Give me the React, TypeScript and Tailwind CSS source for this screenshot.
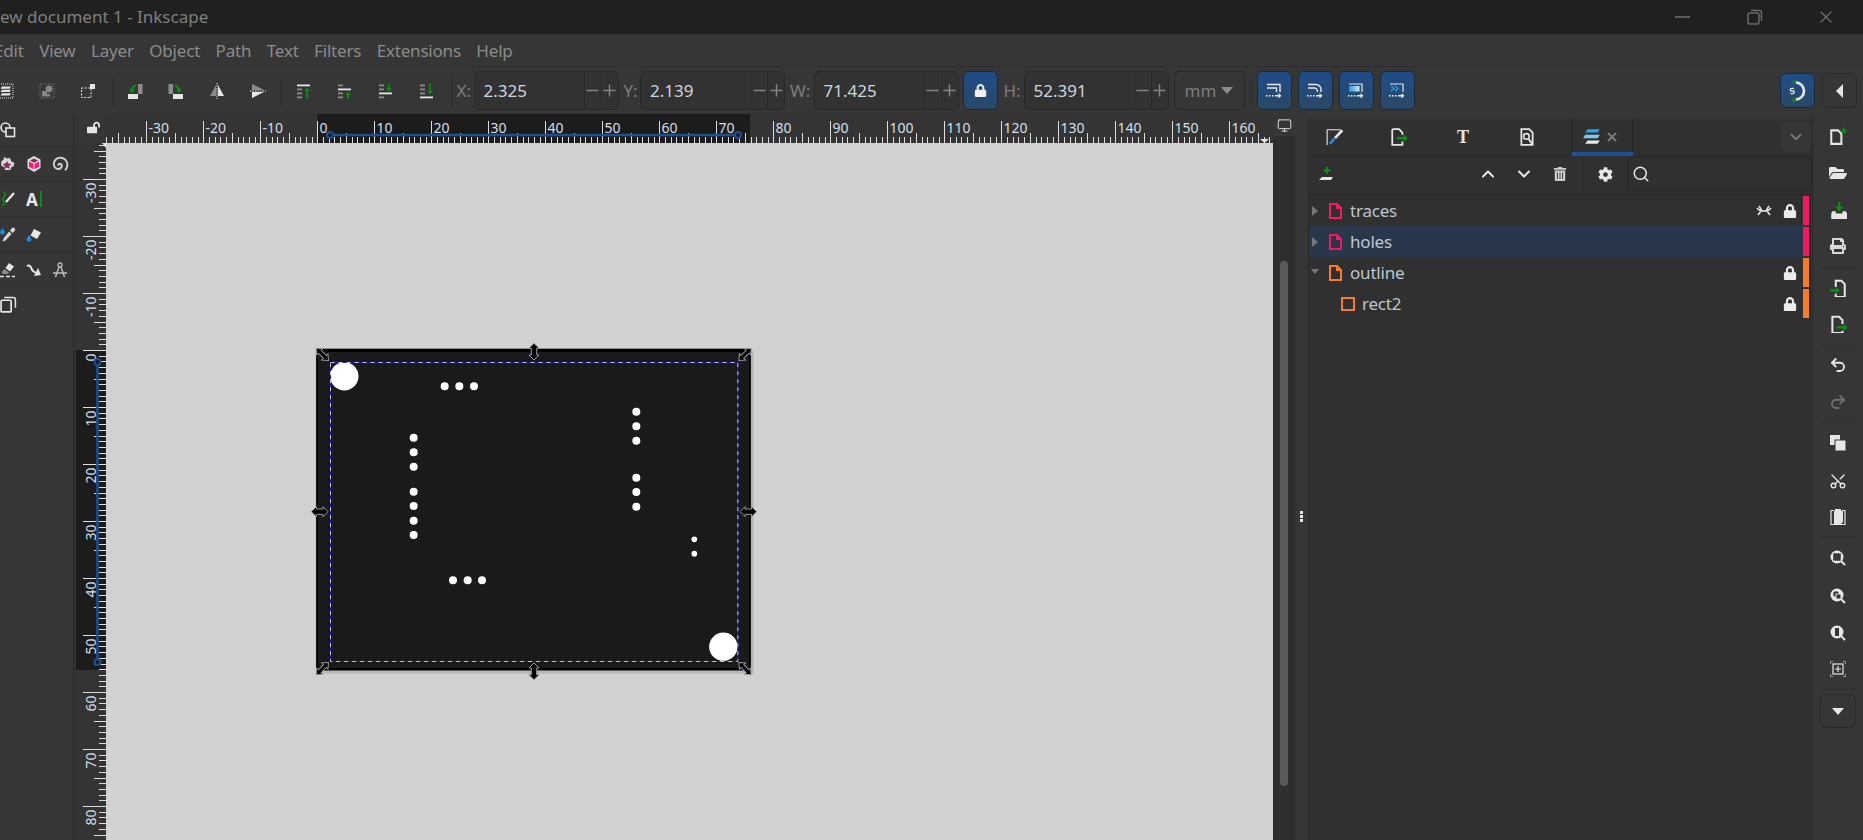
import type { ReactNode } from 'react';
import { ChevronDown, ChevronUp, Minus, Monitor, Plus, Redo2, Scissors, Search, Undo2, X } from 'lucide-react';
import { FaCog, FaFolderOpen, FaLock, FaLockOpen, FaPrint, FaTrashAlt } from 'react-icons/fa';

const W = '#e6e6e6';
const GRAY = '#8c8c8c';
const GREEN = '#0a8f14';
const BLUE = '#1d4f91';

function Ico({ children, size = 16 }: { children: ReactNode; size?: number }) {
  return (
    <svg width={size} height={size} viewBox="0 0 16 16" className="shrink-0">
      {children}
    </svg>
  );
}

function Slot({ w, children }: { w: string; children: ReactNode }) {
  return <div className={`flex items-center justify-center shrink-0 ${w}`}>{children}</div>;
}

const Arrow = ({ x, y1, y2, down }: { x: number; y1: number; y2: number; down?: boolean }) => (
  <path
    fill={GREEN}
    d={
      down
        ? `M${x - 0.8} ${y1}h1.6V${y2 - 3}H${x + 3}L${x} ${y2}L${x - 3} ${y2 - 3}H${x - 0.8}Z`
        : `M${x - 0.8} ${y2}h1.6V${y1 + 3}H${x + 3}L${x} ${y1}L${x - 3} ${y1 + 3}H${x - 0.8}Z`
    }
  />
);

// z-order icons: which of the four rows is the white one
const Order = ({ white, children }: { white: number; children: ReactNode }) => (
  <Ico>
    {[1.5, 5.5, 9.5, 13.5].map((y, i) =>
      i === white ? (
        <rect key={y} x="1" y={y} width="13" height="1.8" fill={W} />
      ) : (
        <rect key={y} x="1" y={y} width="5" height="1.8" fill={GRAY} />
      ),
    )}
    {children}
  </Ico>
);

const CmdArrow = () => (
  <g fill={W}>
    <rect x="0" y="12" width="1.6" height="1.6" />
    <rect x="3" y="12" width="1.6" height="1.6" />
    <rect x="6" y="12" width="1.6" height="1.6" />
    <path d="M9 12h3.5v-2l3 2.8-3 2.8v-2H9z" />
  </g>
);

const BlueBtn = ({ children }: { children: ReactNode }) => (
  <div className="flex h-[39px] w-[35px] shrink-0 items-center justify-center rounded-md border border-[#1a2a3e] bg-linear-to-b from-[#1e4c88] to-[#2a4866]">
    {children}
  </div>
);

function Field({ value }: { value: string }) {
  return (
    <div className="flex h-[39px] w-[145px] shrink-0 items-stretch rounded-md border border-[#282828] bg-[#323232]">
      <div className="flex flex-1 items-center pl-[9px] text-[17px] text-[#ccd6df]">{value}</div>
      <div className="flex w-[17px] items-center justify-center border-l border-[#2c2c2c]">
        <Minus size={19} strokeWidth={1.8} color="#858585" className="shrink-0" />
      </div>
      <div className="flex w-[17px] items-center justify-center border-l border-[#2c2c2c]">
        <Plus size={19} strokeWidth={1.8} color="#858585" className="shrink-0" />
      </div>
    </div>
  );
}

function Label({ w, ml, children }: { w: string; ml: string; children: ReactNode }) {
  return <div className={`shrink-0 text-[17px] text-[#7d7d7d] ${w} ${ml}`}>{children}</div>;
}

const Sep = ({ cls }: { cls: string }) => <div className={`h-[34px] w-px shrink-0 bg-[#2f2f2f] ${cls}`} />;

function TopBar() {
  return (
    <>
      <div className="flex h-[34px] items-center justify-between bg-[#202020] text-[17px] text-[#7f7f7f]">
        <div className="ml-0">ew document 1 - Inkscape</div>
        <div className="flex items-center">
          <div className="mr-[57px] h-[2px] w-[15px] bg-[#5c5c5c]" />
          <svg width="16" height="16" viewBox="0 0 16 16" className="mr-[53px]" fill="none" stroke="#6a6a6a" strokeWidth="1.5">
            <rect x="1" y="4" width="11" height="11" rx="2" />
            <path d="M4 1.5h8.5a2 2 0 0 1 2 2V12" />
          </svg>
          <X size={20} strokeWidth={1.4} color="#6f6f6f" className="mr-[27px]" />
        </div>
      </div>
      <div className="flex h-[32px] items-center gap-[15.5px] overflow-hidden bg-[#363636] pt-[2px] text-[17px] tracking-[-0.2px] text-[#8b8b8b]">
        <span className="-ml-[6px]">Edit</span>
        <span>View</span>
        <span>Layer</span>
        <span>Object</span>
        <span>Path</span>
        <span>Text</span>
        <span>Filters</span>
        <span>Extensions</span>
        <span>Help</span>
      </div>
    </>
  );
}

function Toolbar() {
  return (
    <div className="flex h-[48px] items-center border-t border-[#303030] bg-[#363636]">
      <div className="-ml-[14.5px] flex items-center">
        <Slot w="w-[41px]">
          <Ico>
            <rect x="1" y="1" width="14" height="14" fill="none" stroke={W} strokeDasharray="1 1" />
            <path fill={W} d="M4 3.5h9l-1.5 2.2h-9zM4 6.8h9l-1.5 2.2h-9zM4 10.2h9l-1.5 2.2h-9z" />
          </Ico>
        </Slot>
        <Slot w="w-[41px]">
          <Ico>
            <rect x="1" y="1" width="14" height="14" fill="none" stroke="#777" strokeDasharray="1 1" />
            <circle cx="10" cy="6" r="3.4" fill="#888" />
            <path fill="#888" d="M3 8h5v3h3v2.5H3z" />
          </Ico>
        </Slot>
        <Slot w="w-[41px]">
          <Ico>
            <rect x="1.5" y="5" width="9.5" height="9.5" fill="none" stroke={W} strokeDasharray="2 1.4" />
            <rect x="10" y="1" width="5" height="5" fill={W} />
          </Ico>
        </Slot>
      </div>
      <Sep cls="ml-[3px] mr-[2px]" />
      <Slot w="w-[41px]">
        <Ico>
          <rect x="11" y="1" width="4.6" height="10" fill="#8c8c8c" />
          <rect x="1" y="11" width="10" height="5" fill={W} />
          <path fill="none" stroke={GREEN} strokeWidth="2" d="M9.5 2.5C6.5 3 5 5 5 8" />
          <path fill={GREEN} d="M1.8 6.5h6.4L5 10z" />
        </Ico>
      </Slot>
      <Slot w="w-[41px]">
        <Ico>
          <rect x="0.5" y="1" width="4.6" height="10" fill="#8c8c8c" />
          <rect x="5" y="11" width="10" height="5" fill={W} />
          <path fill="none" stroke={GREEN} strokeWidth="2" d="M6.5 2.5C9.5 3 11 5 11 8" />
          <path fill={GREEN} d="M7.8 6.5h6.4L11 10z" />
        </Ico>
      </Slot>
      <Slot w="w-[41px]">
        <Ico>
          <path fill="#8c8c8c" d="M7 2v11H1z" />
          <path fill={W} d="M9 2l6 11H9z" />
          <path stroke={W} strokeDasharray="1.5 1" d="M8 0v16" />
        </Ico>
      </Slot>
      <Slot w="w-[41px]">
        <Ico>
          <path fill="#8c8c8c" d="M2 1l12 6H2z" />
          <path fill={W} d="M2 9h12L2 15z" />
          <path stroke={W} strokeDasharray="1.5 1" d="M0 8h16" />
        </Ico>
      </Slot>
      <Sep cls="ml-[2px] mr-[2px]" />
      <Slot w="w-[41px]">
        <Order white={0}>
          <Arrow x={11} y1={5} y2={16} />
        </Order>
      </Slot>
      <Slot w="w-[41px]">
        <Order white={1}>
          <Arrow x={11} y1={9} y2={16} />
        </Order>
      </Slot>
      <Slot w="w-[41px]">
        <Order white={2}>
          <Arrow x={11} y1={1} y2={8} down />
        </Order>
      </Slot>
      <Slot w="w-[41px]">
        <Order white={3}>
          <Arrow x={11} y1={0} y2={11} down />
        </Order>
      </Slot>
      <Sep cls="ml-[3px]" />
      <Label w="w-[17px]" ml="ml-[5px]">X:</Label>
      <Field value="2.325" />
      <Label w="w-[16.5px]" ml="ml-[5px]">Y:</Label>
      <Field value="2.139" />
      <Label w="w-[23.5px]" ml="ml-[5px]">W:</Label>
      <Field value="71.425" />
      <div className="ml-[4px]">
        <BlueBtn>
          <FaLock size={13} color="#f0f0f0" />
        </BlueBtn>
      </div>
      <Label w="w-[20px]" ml="ml-[6px]">H:</Label>
      <Field value="52.391" />
      <div className="ml-[5px] flex h-[39px] w-[71px] shrink-0 items-center justify-center gap-[5px] rounded-md border border-[#282828] text-[17px] text-[#7d7d7d]">
        mm
        <svg width="12" height="8" viewBox="0 0 12 8">
          <path fill="#8c8c8c" d="M0 0h12L6 7z" />
        </svg>
      </div>
      <Sep cls="ml-[5px] mr-[6px]" />
      <div className="flex gap-[6px]">
        <BlueBtn>
          <Ico>
            <path fill="none" stroke={W} strokeWidth="1.4" d="M1 1.5h13V9M1 5h9.5v4" />
            <CmdArrow />
          </Ico>
        </BlueBtn>
        <BlueBtn>
          <Ico>
            <path fill="none" stroke={W} strokeWidth="1.4" d="M1 1.5h8a5 5 0 0 1 5 5V9M1 5h6a3.5 3.5 0 0 1 3.5 3.5V9" />
            <CmdArrow />
          </Ico>
        </BlueBtn>
        <BlueBtn>
          <Ico>
            <defs>
              <linearGradient id="bbox-grad" x1="0" x2="1" y1="0" y2="0">
                <stop offset="0" stopColor="#1b9be6" />
                <stop offset="1" stopColor="#d8ecf8" />
              </linearGradient>
            </defs>
            <rect x="1" y="3" width="10.5" height="5.5" fill="url(#bbox-grad)" />
            <path fill="none" stroke={W} strokeWidth="1.2" d="M1 1h13v8" />
            <CmdArrow />
          </Ico>
        </BlueBtn>
        <BlueBtn>
          <Ico>
            <path fill="none" stroke={W} strokeWidth="1.2" d="M1 1h13v8" />
            <path fill="none" stroke="#29a5ee" strokeWidth="1.2" d="M2 3l3 2.5L2 8M6 3l3 2.5L6 8" />
            <CmdArrow />
          </Ico>
        </BlueBtn>
      </div>
      <div className="ml-auto flex gap-[7px] pr-[6px]">
        <div className="flex h-[35px] w-[35px] items-center justify-center rounded-md border border-[#1a2a3e] bg-linear-to-b from-[#1e4c88] to-[#2a4866]">
          <svg width="24" height="24" viewBox="0 0 18 18">
            <path fill="none" stroke={W} strokeWidth="2" d="M7 2.5a6.5 6.5 0 0 1 0 13" />
            <rect x="5" y="1" width="2.6" height="2.6" fill={GREEN} />
            <rect x="5" y="14.4" width="2.6" height="2.6" fill={GREEN} />
            <path fill="none" stroke={W} strokeWidth="1" d="M6 7H4.2a1 1 0 0 0 0 2h1a1 1 0 0 1 0 2H3.4" />
          </svg>
        </div>
        <div className="flex h-[35px] w-[35px] items-center justify-center rounded-md border border-[#2a2a2a]">
          <svg width="8" height="14" viewBox="0 0 8 14">
            <path fill={W} d="M7 0v14L0 7z" />
          </svg>
        </div>
      </div>
    </div>
  );
}

const ToolRow = ({ h, children }: { h: string; children: ReactNode }) => (
  <div className={`-ml-[5px] flex items-center border-b border-[#2f2f2f] ${h}`}>{children}</div>
);

function ToolColumn() {
  return (
    <div className="w-[73px] shrink-0 overflow-hidden bg-[#363636]">
      <ToolRow h="h-[33px]">
        <Slot w="w-[26px]">
          <Ico>
            <circle cx="5.5" cy="5.5" r="4.5" fill="none" stroke={W} strokeWidth="1.6" />
            <rect x="6" y="6" width="8.5" height="8.5" fill="#363636" stroke={W} strokeWidth="1.6" />
          </Ico>
        </Slot>
      </ToolRow>
      <ToolRow h="h-[35px]">
        <Slot w="w-[26px]">
          <Ico>
            <path fill="#d8d8d8" d="M4 1l3 1.5L10 2l1 3 3.5 2-1 3.5-2 .5-1 3H5L4 11 1 9.5 1.5 5 3.5 4z" />
            <path fill="#8b2a5f" d="M7 5l1.3 2.6 3 .4-2.2 2 .6 3L7 11.5 4.3 13l.5-3-2.2-2 3-.4z" />
          </Ico>
        </Slot>
        <Slot w="w-[26px]">
          <Ico>
            <path fill="#dcdcdc" d="M8 0l6.5 3.5v8.5L8 16l-6.5-4V3.500z" />
            <path fill="#f01f7a" d="M3 5.500l4.500 2.300v5.400L3 10.800zM13 5.500v5.300l-4.500 2.400V7.800z" />
            <path fill="#7a2a55" d="M8 2.500l4 2-4 2.200-4-2.200z" />
          </Ico>
        </Slot>
        <Slot w="w-[26px]">
          <Ico size={18}>
            <path
              fill="none"
              stroke="#d0d0d0"
              strokeWidth="1.8"
              d="M6.500 9.500a1.500 1.500 0 0 1 3-.5 3 3 0 0 1-3 3.500A4.300 4.300 0 0 1 2.500 8a5.500 5.500 0 0 1 5.700-5.500A6 6 0 0 1 14.500 9c0 2-1 3.500-2 4.500"
            />
          </Ico>
        </Slot>
      </ToolRow>
      <ToolRow h="h-[35px]">
        <Slot w="w-[26px]">
          <Ico>
            <path fill="none" stroke={GREEN} strokeWidth="1.6" d="M3 1c3 1 3 3 1 5s-1 5 0 5 2 2-2 3" />
            <path stroke={W} strokeWidth="2.2" d="M6 11l8-9" />
          </Ico>
        </Slot>
        <Slot w="w-[26px]">
          <div className="flex items-center gap-[2px]">
            <span className="text-[17px] font-bold leading-none text-[#e6e6e6]">A</span>
            <div className="h-[16px] w-[2px] bg-[#0a8f14]" />
          </div>
        </Slot>
      </ToolRow>
      <ToolRow h="h-[36px]">
        <Slot w="w-[26px]">
          <Ico>
            <path fill="#1a8fe0" d="M2.500 1L5 5a2.500 2.500 0 1 1-5 0z" />
            <path fill="#d8d8d8" d="M12 1a2 2 0 0 1 2.800 2.800L12.500 6 10 3.500zM9 4.500L11.500 7 5.500 13.500l-3 1 1-3z" />
          </Ico>
        </Slot>
        <Slot w="w-[26px]">
          <Ico>
            <path fill={W} d="M8 2l7 3.500-4 6.500-6.500-3.500z" />
            <path fill="#1a8fe0" d="M3 8l2.500 4a2.500 2.500 0 1 1-5 0z" />
          </Ico>
        </Slot>
      </ToolRow>
      <ToolRow h="h-[34px]">
        <Slot w="w-[26px]">
          <Ico>
            <path fill={W} d="M9 1l5 3.500-4 5L5.500 6z" />
            <path fill="#8c8c8c" d="M4.500 7L9 10.500 7.500 12H3l-1.500-2z" />
            <path stroke={W} strokeWidth="1.5" strokeDasharray="4 2" d="M0 14.500h15" />
          </Ico>
        </Slot>
        <Slot w="w-[26px]">
          <Ico>
            <path fill="none" stroke={W} strokeWidth="2" d="M1 4c4-2 4 3 6 5l3 2" />
            <path fill={W} d="M12 6l3 7-7 1z" />
          </Ico>
        </Slot>
        <Slot w="w-[26px]">
          <Ico>
            <circle cx="8" cy="3" r="2" fill="none" stroke="#bdbdbd" strokeWidth="1.3" />
            <path fill="none" stroke="#bdbdbd" strokeWidth="1.5" d="M7 5L3.500 15M9 5l3.500 10M1 11h14" />
          </Ico>
        </Slot>
      </ToolRow>
      <ToolRow h="h-[35px] border-b-0">
        <Slot w="w-[26px]">
          <Ico size={17}>
            <rect x="1" y="4" width="9.5" height="11" rx="1" fill="#363636" stroke={W} strokeWidth="1.6" />
            <path fill="none" stroke={W} strokeWidth="1.4" d="M4 1.500h8.500a2 2 0 0 1 2 2V11" />
          </Ico>
        </Slot>
      </ToolRow>
    </div>
  );
}

const MM = 5.7;

function TopRuler() {
  const zero = 211.3;
  const ticks: ReactNode[] = [];
  const labels: ReactNode[] = [];
  for (let mm = -37; mm <= 167; mm++) {
    const x = Math.round(zero + mm * MM) + 0.5;
    const top = mm % 10 === 0 ? 7 : mm % 5 === 0 ? 19 : 23;
    ticks.push(<path key={mm} d={`M${x} ${top}V29`} stroke="#dedede" />);
    if (mm % 10 === 0) {
      labels.push(
        <text key={mm} x={x + 2} y={19} fill="#d5dfe8">
          {mm}
        </text>,
      );
    }
  }
  return (
    <svg width="1167" height="29" className="block text-[14px]">
      <rect width="1167" height="29" fill="#343434" />
      <rect x="211" width="433" height="29" fill="#1c1c1c" />
      {ticks}
      {labels}
      <path d="M224 21H632" stroke={BLUE} strokeWidth="2.5" />
      <circle cx="224" cy="21" r="3" fill="#1c1c1c" stroke={BLUE} strokeWidth="2" />
      <circle cx="632" cy="21" r="3" fill="#1c1c1c" stroke={BLUE} strokeWidth="2" />
      <path d="M1154 25h9l-4.500 4z" fill="#e6e6e6" />
    </svg>
  );
}

function SideRuler() {
  const zero = 207;
  const ticks: ReactNode[] = [];
  const labels: ReactNode[] = [];
  for (let mm = -36; mm <= 86; mm++) {
    const y = Math.round(zero + mm * MM) + 0.5;
    const left = mm % 10 === 0 ? 7 : mm % 5 === 0 ? 18 : 23;
    ticks.push(<path key={mm} d={`M${left} ${y}H30`} stroke="#dedede" />);
    if (mm % 10 === 0) {
      labels.push(
        <text key={mm} transform={`translate(20 ${y + 3}) rotate(-90)`} textAnchor="end" fill="#d5dfe8">
          {mm}
        </text>,
      );
    }
  }
  return (
    <svg width="30" height="697" className="block shrink-0 text-[14px]">
      <rect width="30" height="697" fill="#343434" />
      <rect y="207" width="30" height="320" fill="#1c1c1c" />
      {ticks}
      {labels}
      <path d="M21.5 219V519" stroke={BLUE} strokeWidth="2.5" />
      <circle cx="21.5" cy="219" r="3" fill="#1c1c1c" stroke={BLUE} strokeWidth="2" />
      <circle cx="21.5" cy="519" r="3" fill="#1c1c1c" stroke={BLUE} strokeWidth="2" />
      <path d="M26 0h4v5z" fill="#e6e6e6" />
    </svg>
  );
}

const dots: [number, number, number][] = [
  [434, 169, 12], [478, 169, 12], [522, 169, 12],
  [341, 323, 12], [341, 367, 12], [341, 410, 12],
  [341, 485, 12], [341, 528, 12], [341, 572, 12], [341, 615, 12],
  [1009, 245, 12], [1009, 289, 12], [1009, 332, 12],
  [1009, 443, 12], [1009, 486, 12], [1009, 530, 12],
  [1183, 628, 8.5], [1183, 671, 8.5],
  [459, 751, 12], [503, 751, 12], [546, 751, 12],
  [133, 139, 42.5], [1270, 950, 42.5],
];

const DBL = 'M0-25L15-10H8V10H15L0 25L-15 10H-8V-10H-15Z';
const CORNER = 'M0-26L13-11H6V11H13L0 26L-13 11H-6V-11H-13Z';

function Board() {
  return (
    <svg width="480" height="360" viewBox="0 0 1440 1080" className="absolute left-[194px] top-[187px]">
      <rect x="53" y="63" width="1308" height="968" fill="#000" opacity="0.12" />
      <rect x="48" y="56" width="1305" height="966" fill="#000" stroke="#9a9a9a" strokeWidth="1" />
      <rect x="54" y="66" width="1293" height="948" fill="#1a1a1a" />
      {dots.map(([x, y, r]) => (
        <circle key={`${x}-${y}`} cx={x} cy={y} r={r} fill="#fff" />
      ))}
      <rect x="91.5" y="97.5" width="1222" height="897" fill="none" stroke="#1a1ad0" strokeWidth="3" />
      <rect x="91.5" y="97.5" width="1222" height="897" fill="none" stroke="#c8c8c8" strokeWidth="3" strokeDasharray="12 12" />
      <g fill="#000" stroke="#9a9a9a" strokeWidth="3">
        <path transform="translate(702 65)" d={DBL} />
        <path transform="translate(702 1024)" d={DBL} />
        <path transform="translate(59 545) rotate(90)" d={DBL} />
        <path transform="translate(1345 545) rotate(90)" d={DBL} />
        <path transform="translate(67 73) rotate(-45)" d={CORNER} />
        <path transform="translate(1335 73) rotate(45)" d={CORNER} />
        <path transform="translate(67 1016) rotate(45)" d={CORNER} />
        <path transform="translate(1335 1016) rotate(-45)" d={CORNER} />
      </g>
    </svg>
  );
}

function LayerRow({
  name,
  color,
  open,
  active,
  child,
  hidden,
  lock,
}: {
  name: string;
  color: string;
  open?: boolean;
  active?: boolean;
  child?: boolean;
  hidden?: boolean;
  lock?: boolean;
}) {
  return (
    <div className="flex h-[31px] items-center">
      <div className={`flex h-full flex-1 items-center ${active ? 'bg-[#2a374a]' : ''}`}>
        <div className="flex w-[12px] shrink-0 justify-center">
          {!child && (
            <svg width="8" height="10" viewBox="0 0 8 10">
              <path fill="#777" d={open ? 'M0 1h8L4 6z' : 'M1 0l6 5-6 5z'} />
            </svg>
          )}
        </div>
        {child ? (
          <div className="ml-[20px] h-[14px] w-[14px] shrink-0 border-2 border-[#f47b2f]" />
        ) : (
          <svg width="13" height="16" viewBox="0 0 13 16" className="ml-[8px] shrink-0">
            <path fill="none" stroke={color} strokeWidth="2" d="M1 1h7l4 4v10H1zM8 1v4h4" />
          </svg>
        )}
        <span className={`pt-[1px] text-[17px] tracking-[-0.2px] text-[#bcc6cf] ${child ? 'ml-[7px]' : 'ml-[8px]'}`}>{name}</span>
        <div className="ml-auto flex items-center">
          {hidden && (
            <svg width="16" height="12" viewBox="0 0 16 12" className="mr-[11px]">
              <path fill="none" stroke="#e6e6e6" strokeWidth="1.6" d="M1 3c3 4 11 4 14 0M3 1l2.500 4M13 1l-2.500 4M2 10l3-4M14 10l-3-4" />
            </svg>
          )}
          {lock && (
            <div className="mr-[6px]">
              <FaLock size={14} color="#ececec" />
            </div>
          )}
        </div>
      </div>
      <div className="mr-[1px] h-[29px] w-[6px] shrink-0" style={{ backgroundColor: color }} />
    </div>
  );
}

function LayersPanel() {
  return (
    <div className="flex w-[505px] shrink-0 flex-col pt-[5px]">
      <div className="flex h-[37px] shrink-0 items-center border-b border-[#262626] bg-[#303030]">
        <div className="-ml-[4px] flex">
          <Slot w="w-[64px]">
            <Ico size={18}>
              <path fill="none" stroke={W} strokeWidth="1" d="M1 15V1.500h12" />
              <path stroke={W} strokeWidth="2.4" d="M8 9l6.500-7" />
              <path stroke="#1a8fe0" strokeWidth="2.4" d="M3.500 14l4-4.500" />
            </Ico>
          </Slot>
          <Slot w="w-[64px]">
            <Ico size={18}>
              <path fill="none" stroke={W} strokeWidth="1.6" d="M2 1h6l3 3v2M11 12v3H2V1" />
              <path fill={GREEN} d="M6 8h6V5.500L16 9l-4 3.500V10H6z" />
            </Ico>
          </Slot>
          <Slot w="w-[64px]">
            <span className="font-['Liberation_Serif',serif] text-[18px] font-bold leading-none text-[#e6e6e6]">T</span>
          </Slot>
          <Slot w="w-[64px]">
            <Ico size={18}>
              <path fill="none" stroke={W} strokeWidth="1.6" d="M3 1h7l3 3v11H3z" />
              <circle cx="7.5" cy="7.5" r="2.5" fill="none" stroke={W} strokeWidth="1.4" />
              <path stroke={W} strokeWidth="1.8" d="M9.500 10l3 4" />
            </Ico>
          </Slot>
        </div>
        <div className="relative ml-[13px] flex h-full w-[61px] shrink-0 items-center border-x border-[#262626] pl-[10px]">
          <Ico size={18}>
            <path fill="#29a5ee" d="M4 1h11l-2 3H2z" />
            <path fill="#7dcaf0" d="M2 6h13l-2 3H0z" />
            <path fill={W} d="M4 11h11l-2 3H2z" />
          </Ico>
          <X size={14} strokeWidth={3.4} color="#7a7a7a" className="ml-[4px]" />
          <div className="absolute -bottom-px -left-px -right-px h-[4px] bg-[#1d4f91]" />
        </div>
        <div className="ml-auto mr-[1px] flex h-[30px] w-[30px] items-center justify-center rounded-md bg-[#363636]">
          <ChevronDown size={18} color="#777" strokeWidth={2.4} />
        </div>
      </div>
      <div className="flex h-[38px] shrink-0 items-center bg-[#303030] pb-[2px]">
        <div className="ml-[12px]">
          <Ico>
            <rect x="7" y="1" width="2" height="7" fill={GREEN} />
            <rect x="4.5" y="3.5" width="7" height="2" fill={GREEN} />
            <path fill={W} d="M3 11h11l-2 3H0z" />
          </Ico>
        </div>
        <Slot w="ml-[135px] w-9">
          <ChevronUp size={20} color={W} strokeWidth={2.4} />
        </Slot>
        <Slot w="w-9">
          <ChevronDown size={20} color={W} strokeWidth={2.4} />
        </Slot>
        <Slot w="w-9">
          <FaTrashAlt size={14} color="#d0d0d0" />
        </Slot>
        <div className="ml-[5px] h-full w-px bg-[#2a2a2a]" />
        <Slot w="ml-[5px] w-[32px]">
          <FaCog size={15} color={W} />
        </Slot>
        <div className="ml-[7px] flex h-[34px] flex-1 items-center rounded-md border border-[#262626] pl-[3px]">
          <Search size={18} color={W} strokeWidth={2} />
        </div>
      </div>
      <div className="mx-[1px] flex-1 border-x border-t border-[#262626] bg-[#303030]">
        <LayerRow name="traces" color="#ef1a5f" hidden lock />
        <LayerRow name="holes" color="#ef1a5f" active />
        <LayerRow name="outline" color="#f47b2f" open lock />
        <LayerRow name="rect2" color="#f47b2f" child lock />
      </div>
    </div>
  );
}

const CmdGap = ({ cls }: { cls: string }) => <div className={`mx-auto h-px w-[36px] shrink-0 bg-[#2f2f2f] ${cls}`} />;

const Cmd = ({ h, children }: { h: string; children: ReactNode }) => (
  <div className={`flex shrink-0 items-center justify-center ${h}`}>{children}</div>
);

function CommandBar() {
  return (
    <div className="flex flex-1 flex-col items-center border-l border-[#2a2a2a] bg-[#363636] pt-[4px]">
      <Cmd h="h-[36px]">
        <Ico size={18}>
          <path fill="none" stroke={W} strokeWidth="1.8" d="M2 3h6l3 3v9H2z" />
          <path fill={GREEN} d="M13 0l1 2 2 .2-1.5 1.5.4 2.100L13 4.800l-1.900 1 .4-2.100L10 2.200 12 2z" />
        </Ico>
      </Cmd>
      <Cmd h="h-[37px]">
        <FaFolderOpen size={18} color={W} />
      </Cmd>
      <Cmd h="h-[37px]">
        <Ico size={18}>
          <path fill={W} d="M3 9h3v2h6V9h3l1 2v5H2v-5z" />
          <rect x="8" y="1" width="2" height="5" fill={GREEN} />
          <path fill={GREEN} d="M5.500 5h7L9 9z" />
        </Ico>
      </Cmd>
      <Cmd h="h-[36px]">
        <FaPrint size={16} color="#d8d8d8" />
      </Cmd>
      <CmdGap cls="mt-[3px]" />
      <Cmd h="mt-[2px] h-[36px]">
        <Ico size={18}>
          <path fill="none" stroke={W} strokeWidth="1.8" d="M6 7V1.500h5l3 3V16H6v-3" />
          <path fill={GREEN} d="M1 9h5V7l3.500 3L6 13v-2H1z" />
        </Ico>
      </Cmd>
      <Cmd h="h-[36px]">
        <Ico size={18}>
          <path fill="none" stroke={W} strokeWidth="1.8" d="M3 16V1.500h6l3 3V8M12 14v2H3" />
          <path fill={GREEN} d="M7 10h6V8l4 3-4 3v-2H7z" />
        </Ico>
      </Cmd>
      <CmdGap cls="mt-[3px]" />
      <Cmd h="h-[37px]">
        <Undo2 size={18} color={W} strokeWidth={2.4} />
      </Cmd>
      <Cmd h="h-[38px]">
        <Redo2 size={18} color="#707070" strokeWidth={2.4} />
      </Cmd>
      <CmdGap cls="mt-[1px]" />
      <Cmd h="h-[40px]">
        <Ico>
          <rect x="0" y="0" width="10" height="10" fill={W} />
          <rect x="5" y="5" width="11" height="11" fill={W} stroke="#363636" strokeWidth="1" />
        </Ico>
      </Cmd>
      <Cmd h="h-[36px]">
        <Scissors size={18} color={W} strokeWidth={1.8} className="-rotate-90" />
      </Cmd>
      <Cmd h="h-[36px]">
        <Ico>
          <path fill="none" stroke={W} strokeWidth="1.2" d="M4 1.500H1v14h14v-14h-3" />
          <path fill={W} d="M5 0h6v2h2v11l-2 2H4V2h1z" />
        </Ico>
      </Cmd>
      <CmdGap cls="mt-[1px]" />
      <Cmd h="h-[41px]">
        <Ico>
          <circle cx="7" cy="7" r="6.5" fill={W} />
          <rect x="3" y="3" width="8" height="8" fill="#363636" stroke={W} strokeDasharray="1 1" />
          <path stroke={W} strokeWidth="2" d="M11 11l4 4" />
        </Ico>
      </Cmd>
      <Cmd h="h-[36px]">
        <Ico>
          <circle cx="7" cy="7" r="6.5" fill={W} />
          <circle cx="6" cy="6" r="2.8" fill="#363636" />
          <rect x="6" y="6" width="5" height="5" fill="#363636" stroke={W} />
          <path stroke={W} strokeWidth="2" d="M11 11l4 4" />
        </Ico>
      </Cmd>
      <Cmd h="h-[37px]">
        <Ico>
          <circle cx="7" cy="7" r="6.5" fill={W} />
          <rect x="4.5" y="2.5" width="5" height="9" fill="#363636" stroke={W} />
          <path stroke={W} strokeWidth="2" d="M11 11l4 4" />
        </Ico>
      </Cmd>
      <Cmd h="h-[36px]">
        <Ico>
          <path fill="none" stroke="#9a9a9a" d="M.5 3V.5H3M13 .5h2.500V3M15.500 13v2.500H13M3 15.500H.5V13" />
          <rect x="3" y="3" width="10" height="10" fill="none" stroke={W} strokeWidth="1.2" />
          <path stroke={W} strokeWidth="1.2" d="M8 5v6M5 8h6" />
        </Ico>
      </Cmd>
      <CmdGap cls="mt-[2px]" />
      <div className="mt-[4px] flex h-[34px] w-[36px] shrink-0 items-center justify-center rounded-md border border-[#2a2a2a]">
        <svg width="12" height="7" viewBox="0 0 12 7">
          <path fill={W} d="M0 0h12L6 7z" />
        </svg>
      </div>
    </div>
  );
}

export default function App() {
  return (
    <div className="flex h-[840px] w-[1863px] flex-col overflow-hidden bg-[#363636] font-['Noto_Sans','Open_Sans',sans-serif]">
      <TopBar />
      <Toolbar />
      <div className="flex min-h-0 flex-1">
        <ToolColumn />
        <div className="w-[3px] shrink-0 border-l border-[#2a2a2a] bg-[#333]" />
        {/* rulers + canvas */}
        <div className="flex w-[1197px] shrink-0 flex-col">
          <div className="flex h-[29px] shrink-0">
            <div className="flex w-[30px] shrink-0 items-center justify-center pb-[2px] pl-[4px]">
              <FaLockOpen size={13} color={W} />
            </div>
            <TopRuler />
          </div>
          <div className="flex min-h-0 flex-1">
            <SideRuler />
            <div className="relative flex-1 bg-[#d1d1d1]">
              <Board />
            </div>
          </div>
        </div>
        <div className="flex w-[22px] shrink-0 flex-col">
          <div className="flex h-[22px] shrink-0 items-center justify-center">
            <Monitor size={15} color={W} strokeWidth={1.5} />
          </div>
          <div className="flex-1 bg-[#2e2e2e] pl-[7px] pt-[125px]">
            <div className="h-[525px] w-2 rounded-full bg-[#5a5a5a]" />
          </div>
        </div>
        <div className="flex w-[12px] shrink-0 flex-col items-center justify-center gap-px pt-[78px]">
          <div className="h-[3px] w-[3px] bg-[#e6e6e6]" />
          <div className="h-[3px] w-[3px] bg-[#e6e6e6]" />
          <div className="h-[3px] w-[3px] bg-[#e6e6e6]" />
        </div>
        <LayersPanel />
        <CommandBar />
      </div>
    </div>
  );
}
